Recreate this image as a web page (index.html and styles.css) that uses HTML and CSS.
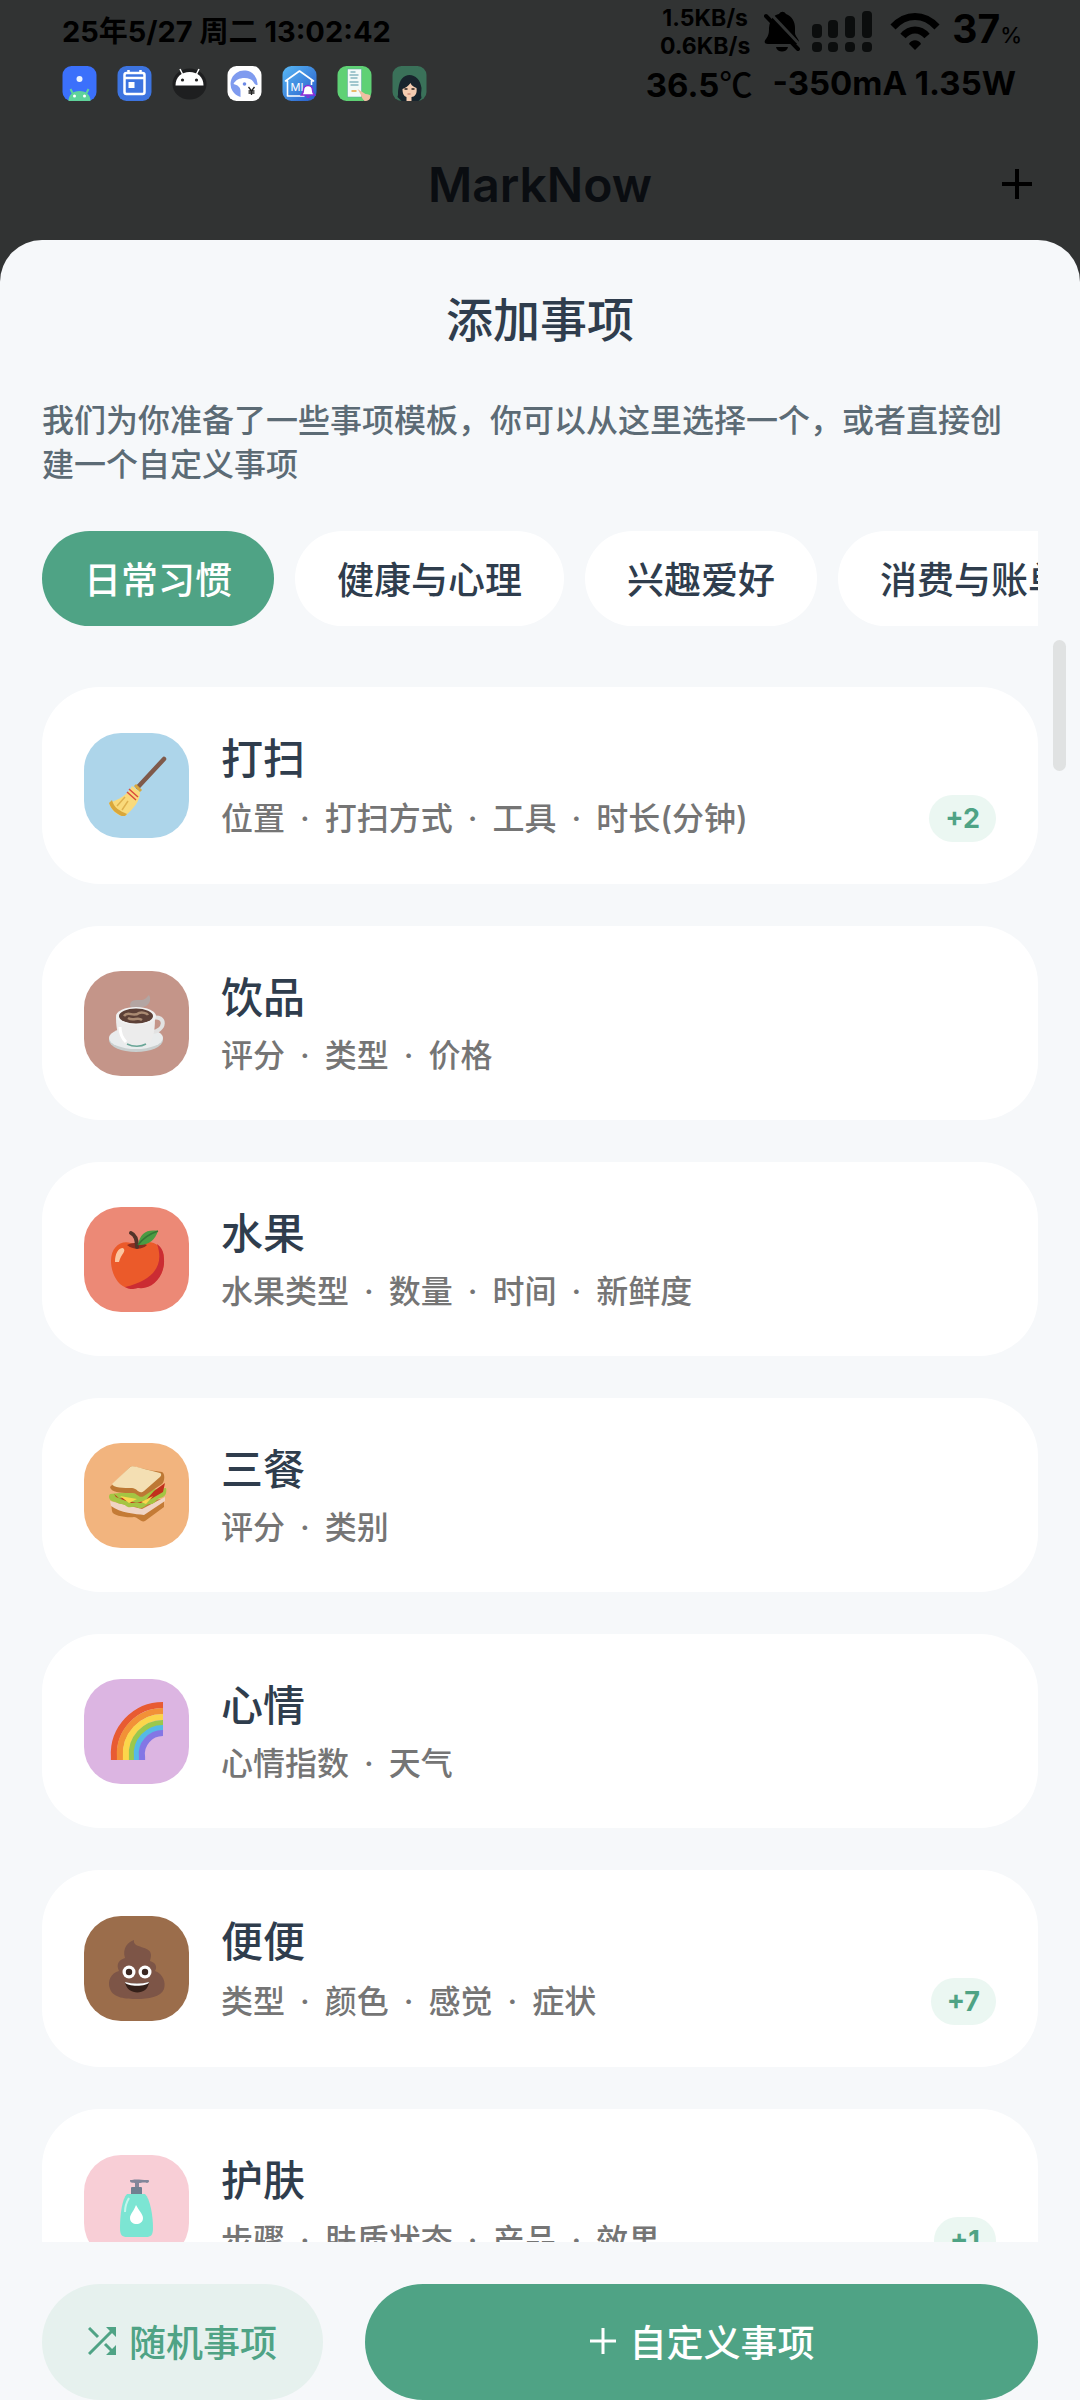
FILE: index.html
```
<!DOCTYPE html>
<html lang="zh-CN">
  <head>
    <meta charset="UTF-8" />
    <meta name="viewport" content="width=device-width, initial-scale=1.0" />
    <title>MarkNow</title>
    <link rel="stylesheet" href="styles.css">
  </head>
  <body>
    <div class="status-bar">
      <div class="status-left">
        <div class="clock">25年5/27 周二 13:02:42</div>
        <div class="notifications">
          <svg viewBox="0 0 34 35">
            <rect width="34" height="35" rx="9" fill="#3b70fb"/>
            <circle cx="17" cy="13" r="3" fill="#e8f2ff"/>
            <path d="M6 35c0-6 4-10 11-10s11 4 11 10z" fill="#5fd39b"/>
            <path d="M10 27l-2-4M24 27l2-4" stroke="#5fd39b" stroke-width="2"/>
            <circle cx="12" cy="30" r="1.5" fill="#fff"/>
            <circle cx="22" cy="30" r="1.5" fill="#fff"/>
          </svg>
          <svg viewBox="0 0 34 35">
            <rect width="34" height="35" rx="9" fill="#3d74e0"/>
            <rect x="7" y="7" width="20" height="21" rx="2" fill="none" stroke="#fff" stroke-width="2.5"/>
            <path d="M7 12h20M11 4v4M23 4v4" stroke="#fff" stroke-width="2.5"/>
            <rect x="11" y="16" width="6" height="6" fill="#fff"/>
          </svg>
          <svg viewBox="0 0 34 35">
            <ellipse cx="17" cy="18" rx="17" ry="15.500" fill="#1e1f20"/>
            <path d="M3 19.500C3 11 9 6 17 6s14 5 14 13.500z" fill="#fff"/>
            <path d="M10 8L7.500 3M24 8l2.500-5" stroke="#fff" stroke-width="1.500"/>
            <circle cx="10" cy="14" r="1.600" fill="#222"/>
            <circle cx="24" cy="14" r="1.600" fill="#222"/>
          </svg>
          <svg viewBox="0 0 34 35">
            <rect width="34" height="35" rx="9" fill="#fff"/>
            <path d="M13 31A13.500 13.500 0 1 1 30 19c-2 0-3-1-4-3-2-3-5-4-9-4-5 0-9 2-11 6 4 1 7 3 7 7z" fill="#7f9bef"/>
            <circle cx="17" cy="18" r="1.800" fill="#6d8ae6"/>
            <path d="M21 21l3 4 3-4M24 25v4M21 25h6M21 27h6" fill="none" stroke="#222" stroke-width="1.300"/>
          </svg>
          <svg viewBox="0 0 34 35">
            <defs>
              <linearGradient id="mi-home" x1="0" y1="0" x2="1" y2="1">
                <stop offset="0" stop-color="#58b9f5"/>
                <stop offset="1" stop-color="#2759c9"/>
              </linearGradient>
            </defs>
            <rect width="34" height="35" rx="9" fill="url(#mi-home)"/>
            <path d="M22 30H5V15H3L17 5l14 10h-2v4" fill="none" stroke="#fff" stroke-width="1.600" stroke-linejoin="round"/>
            <text class="mi-text" x="8" y="25">MI</text>
            <path d="M19 29c2-2 2-3 2-5a4.500 4.500 0 0 1 9 0c0 2 0 3 2 5z" fill="#fff" stroke="#8a2bd8" stroke-width="1.400"/>
            <path d="M24 30.500a2 2 0 0 0 3 0" fill="none" stroke="#8a2bd8" stroke-width="1.400"/>
          </svg>
          <svg viewBox="0 0 34 35">
            <rect width="34" height="35" rx="9" fill="#5fd175"/>
            <rect x="10" y="3" width="14" height="28" fill="#f3faf8" stroke="#57a4a0" stroke-width=".5"/>
            <path d="M13 6h5M12 9h9M13 12h7M12 16h9M13 19h8" stroke="#86b7c0" stroke-width="1.700"/>
            <path d="M14 25h5" stroke="#e8a33c" stroke-width="1.500"/>
            <path d="M20 23l8 5c3 0 5 1 5 2 0 3-2 5-6 5-2-2-3-4-4-7z" fill="#f0bfa2"/>
          </svg>
          <svg viewBox="0 0 34 35">
            <rect width="34" height="35" rx="9" fill="#3a7159"/>
            <path d="M5 31c1-3 0-5 1-9C7 14 11 9 17 9s11 5 12 13c0 4-1 6 0 10l-3 3H9z" fill="#18242d"/>
            <path d="M10 23c3-1 6-3 8-6 1 3 4 4 6 5 1 6-2 9-5 9v4h-5v-4c-3-1-4-4-4-8z" fill="#f3cbb0"/>
            <path d="M12 23h3M19 23h3" stroke="#26221f" stroke-width="1.500"/>
            <path d="M15 28h3" stroke="#b66a5c" stroke-width="1"/>
          </svg>
        </div>
      </div>
      <div class="status-right">
        <div class="status-row">
          <div class="speed">
            <div>1.5KB/s</div>
            <div>0.6KB/s</div>
          </div>
          <svg class="bell" viewBox="0 0 36 42">
            <path d="M5 17C6 8 10 4 15 3c2-3 5-3 7 0 6 2 9 8 9 14v5c0 3 4 6 4 9 0 2-1 2-3 2H4c-4 0-4-3-2-5 3-4 3-7 3-11z" fill="#000"/>
            <path d="M12 36h12c-1 6-11 6-12 0z" fill="#000"/>
            <path d="M5 1l34 36" stroke="#313333" stroke-width="3"/>
            <path d="M2 5l32 33" stroke="#000" stroke-width="4" stroke-linecap="round"/>
          </svg>
          <svg class="signal" viewBox="0 0 60 42">
            <g fill="#0b0d0d">
              <rect x="0" y="13" width="10" height="14" rx="4"/>
              <rect x="16" y="9" width="10" height="18" rx="4"/>
              <rect x="33" y="5" width="10" height="22" rx="4"/>
              <rect x="50" y="0" width="10" height="27" rx="4"/>
              <rect x="0" y="31" width="10" height="10" rx="4"/>
              <rect x="16" y="31" width="10" height="10" rx="4"/>
              <rect x="33" y="31" width="10" height="10" rx="4"/>
              <rect x="50" y="31" width="10" height="10" rx="4"/>
            </g>
          </svg>
          <svg class="wifi" viewBox="0 0 48 38">
            <path d="M2 14C15 0 33 0 46 14M12 23c7-8 17-8 24 0" fill="none" stroke="#000" stroke-width="7"/>
            <path d="M18 31c2-5 10-5 12 0l-6 6z" fill="#000"/>
          </svg>
          <div class="battery">37<small>%</small></div>
        </div>
        <div class="power"><span>36.5<span class="unit">℃</span></span><span>-350mA 1.35W</span></div>
      </div>
    </div>

    <header class="app-header">
      <h1>MarkNow</h1>
      <button class="add-btn" aria-label="添加">
        <svg viewBox="0 0 30 30"><path d="M15 0v30M0 15h30" stroke="#000" stroke-width="4"/></svg>
      </button>
    </header>

    <main class="sheet">
      <h2>添加事项</h2>
      <p class="intro">我们为你准备了一些事项模板，你可以从这里选择一个，或者直接创建一个自定义事项</p>

      <div class="tabs">
        <button class="tab active">日常习惯</button>
        <button class="tab">健康与心理</button>
        <button class="tab">兴趣爱好</button>
        <button class="tab">消费与账单</button>
      </div>

      <div class="list">
        <div class="card">
          <div class="icon blue">
            <svg viewBox="0 0 60 60">
              <path d="M31 31L57 3" stroke="#7f5a4b" stroke-width="4.500" stroke-linecap="round"/>
              <path d="M25 30l8 6c0 10-7 17-16 25C10 59 4 54 2 47c9-3 19-8 23-17z" fill="#f9da7b"/>
              <path d="M2 47c3 8 8 11 15 14l3-3C13 55 7 52 5 44z" fill="#d9a73b"/>
              <path d="M10 50l8-9M15 54l6-9" stroke="#dfb24e" stroke-width="1.500"/>
              <path d="M20 36l9 8M22 33l9 8" stroke="#da4b3d" stroke-width="1.500"/>
              <path d="M28 29l6 6" stroke="#d9a73b" stroke-width="3"/>
            </svg>
          </div>
          <div class="info">
            <h3>打扫</h3>
            <div class="meta">
              <p><span>位置</span><span>打扫方式</span><span>工具</span><span>时长(分钟)</span></p>
              <span class="badge">+2</span>
            </div>
          </div>
        </div>

        <div class="card">
          <div class="icon brown">
            <svg viewBox="0 0 60 60">
              <path d="M23 13c0-7 6-6 10-6 5 0 6-2 9-5 3 5 0 11-6 12-5 1-5 3-6 5z" fill="#b3a5a2"/>
              <ellipse cx="29" cy="47" rx="27" ry="12" fill="#c9cfcf"/>
              <ellipse cx="29" cy="45" rx="27" ry="11" fill="#e9eced"/>
              <path d="M45 25c15-4 14 14-1 14" fill="none" stroke="#e2e2e2" stroke-width="4"/>
              <path d="M9 24h39c0 18-3 30-14 30h-8C14 54 9 42 9 24z" fill="#ececec"/>
              <path d="M20 51c6 3 14 3 19 0" fill="none" stroke="#69a697" stroke-width="1.500"/>
              <path d="M13 34c0 7 3 12 6 15" fill="none" stroke="#fff" stroke-width="3"/>
              <ellipse cx="29" cy="23" rx="20" ry="9" fill="#f1f1f1"/>
              <ellipse cx="29" cy="23" rx="17" ry="7.500" fill="#5c4037"/>
              <path d="M17 23c4-6 9 2 15-3 3-1 8 0 9 2M21 25c6 4 9-2 14 2" fill="none" stroke="#a98a72" stroke-width="2.500"/>
            </svg>
          </div>
          <div class="info">
            <h3>饮品</h3>
            <div class="meta"><p><span>评分</span><span>类型</span><span>价格</span></p></div>
          </div>
        </div>

        <div class="card">
          <div class="icon red">
            <svg viewBox="0 0 60 60">
              <path d="M28 16C17 9 4 16 4 32c0 11 6 25 17 27 4 1 7-1 11-1 13 2 26-11 25-28C57 14 42 9 28 16z" fill="#eb5a2a"/>
              <path d="M50 15c8 22-5 37-32 43 7 4 10 1 14 1 13 2 26-12 25-28 0-8-2-12-7-16z" fill="#cb2c33"/>
              <path d="M20 16c6-3 14-3 20 0-5 5-14 5-20 0z" fill="#8d2e1f"/>
              <path d="M24 4c5 2 6 8 6 14" fill="none" stroke="#54342a" stroke-width="4" stroke-linecap="round"/>
              <path d="M31 16C33 4 40 0 51 2c-3 9-10 15-20 14z" fill="#4b9b43"/>
              <path d="M31 16C36 9 42 5 51 2" stroke="#347735" stroke-width="1.500" fill="none"/>
              <path d="M8 33c0-8 3-14 8-14 4 3-2 6-4 14z" fill="#fbc6a0"/>
            </svg>
          </div>
          <div class="info">
            <h3>水果</h3>
            <div class="meta"><p><span>水果类型</span><span>数量</span><span>时间</span><span>新鲜度</span></p></div>
          </div>
        </div>

        <div class="card">
          <div class="icon orange">
            <svg viewBox="0 0 60 60">
              <path d="M4 38l53-4v8L38 56c-4 2-7-4-11-4-6 1-22-1-22-6z" fill="#c47b36"/>
              <path d="M3 36l32 8 23-12v4L37 50c-8-1-24-2-33-9z" fill="#f0d5c5"/>
              <path d="M3 29c-3 4 1 8 6 8 4 3 7 1 10 4 4 3 8-1 12 2 6 1 7-3 11-4 6 1 7-5 11-6 6-1 7-6 6-10z" fill="#a4c543"/>
              <path d="M7 29l6 5 4-2 7 6 9-1 6-2 8-9 11-8-2 9-12 7-10 4-15-2-10-4z" fill="#c1311c"/>
              <path d="M13 31l17 3-8 4zM34 37l12-6-7 8z" fill="#fbd74d"/>
              <path d="M3 22L22 3c4-4 8 1 33 4 3 1 3 9 0 12L37 31c-5 3-7-3-11-3-5 0-22 1-23-6z" fill="#bd7834"/>
              <path d="M5 19L22 3c4-4 8 0 31 5 2 1 1 3 0 4L37 26c-5 4-7-3-12-3-8 0-19 0-20-4z" fill="#f4dfb3"/>
            </svg>
          </div>
          <div class="info">
            <h3>三餐</h3>
            <div class="meta"><p><span>评分</span><span>类别</span></p></div>
          </div>
        </div>

        <div class="card">
          <div class="icon purple">
            <svg viewBox="0 0 60 60">
              <g fill="none" stroke-width="6.200">
                <path d="M7 59V56A49 49 0 0 1 56 4" stroke="#e85b32"/>
                <path d="M13 59V56A43 43 0 0 1 56 10" stroke="#f29137"/>
                <path d="M19 59V56A37 37 0 0 1 56 16" stroke="#fbd64b"/>
                <path d="M25 59V56A31 31 0 0 1 56 22" stroke="#9bc84b"/>
                <path d="M30 59V56A26 26 0 0 1 56 27" stroke="#55b9e6"/>
                <path d="M35 59V56A21 21 0 0 1 56 32" stroke="#8376e5"/>
              </g>
            </svg>
          </div>
          <div class="info">
            <h3>心情</h3>
            <div class="meta"><p><span>心情指数</span><span>天气</span></p></div>
          </div>
        </div>

        <div class="card">
          <div class="icon dark-brown">
            <svg viewBox="0 0 60 60">
              <path d="M27 1c-2 9 17 5 17 15 0 3-1 5-1 6 7 2 7 7 5 10 8 3 11 11 9 18-3 8-16 10-27 10S6 59 3 50c-3-8 1-16 9-18-3-6-1-11 6-13C15 9 21 3 27 1z" fill="#7d5547"/>
              <circle cx="22" cy="33" r="6.500" fill="#fff"/>
              <circle cx="38" cy="33" r="6.500" fill="#fff"/>
              <circle cx="22" cy="33" r="3.200" fill="#3b2721"/>
              <circle cx="38" cy="33" r="3.200" fill="#3b2721"/>
              <path d="M18 43c8 2 16 2 24 0-1 14-22 14-24 0z" fill="#352019"/>
              <path d="M18 43c8 2 16 2 24 0-1 5-23 5-24 0z" fill="#fff"/>
            </svg>
          </div>
          <div class="info">
            <h3>便便</h3>
            <div class="meta">
              <p><span>类型</span><span>颜色</span><span>感觉</span><span>症状</span></p>
              <span class="badge">+7</span>
            </div>
          </div>
        </div>

        <div class="card">
          <div class="icon pink">
            <svg viewBox="0 0 60 60">
              <path d="M25 2c5-1 8 0 16 0 2 0 1 3-1 3-3-1-6 0-8 0v6h-4V5c-3-1-5 1-5-3z" fill="#82869a"/>
              <rect x="24" y="9" width="11" height="9" rx="1" fill="#708091"/>
              <path d="M20 16h18c5 5 8 21 8 34 0 7-2 9-7 9H20c-5 0-7-2-7-9 0-13 2-29 7-34z" fill="#7ce5d3"/>
              <path d="M22 20c-3 5-4 9-4 14" fill="none" stroke="#c4f6ed" stroke-width="2"/>
              <path d="M29 27c3 6 7 9 7 13 0 8-13 8-13 0 0-4 4-7 6-13z" fill="#fff"/>
            </svg>
          </div>
          <div class="info">
            <h3>护肤</h3>
            <div class="meta">
              <p><span>步骤</span><span>肤质状态</span><span>产品</span><span>效果</span></p>
              <span class="badge">+1</span>
            </div>
          </div>
        </div>
      </div>
      <div class="scroll-thumb"></div>

      <div class="actions">
        <button class="random-btn">
          <svg viewBox="0 0 28 28">
            <path d="M1 1l9 9M1 27L25 3M17 17l8 8" fill="none" stroke="#4fa385" stroke-width="3"/>
            <path d="M18 0h10v10zM18 28h10V18z" fill="#4fa385"/>
          </svg>
          随机事项
        </button>
        <button class="custom-btn">
          <svg viewBox="0 0 28 28"><path d="M14 1v26M1 14h26" stroke="#fff" stroke-width="3"/></svg>
          自定义事项
        </button>
      </div>
    </main>
  </body>
</html>
```
FILE: styles.css
```
* {
  box-sizing: border-box;
}

body {
  display: flex;
  flex-direction: column;
  height: 100vh;
  margin: 0;
  background-color: #313333;
  font-family: Inter, "Noto Sans CJK SC", sans-serif;
  overflow: hidden;
}

h1, h2, h3, p {
  margin: 0;
}

svg {
  display: block;
  flex-shrink: 0;
}

button {
  border: none;
  padding: 0;
  font-family: inherit;
  font-weight: 500;
  cursor: pointer;
}

/* status bar */
.status-bar {
  display: flex;
  justify-content: space-between;
  height: 128px;
  padding: 4px 58px 0 62px;
  font-weight: 700;
  color: #000;
}

.clock {
  font-size: 29px;
  line-height: 56px;
}

.notifications {
  display: flex;
  gap: 20px;
  padding-top: 6px;
}

.notifications svg {
  width: 35px;
  height: 35px;
}

.mi-text {
  font-size: 11px;
  font-weight: 400;
  fill: #fff;
}

.status-right {
  display: flex;
  flex-direction: column;
  align-items: flex-end;
}

.status-row {
  display: flex;
  align-items: center;
  height: 56px;
}

.speed {
  margin-right: 14px;
  font-size: 23px;
  line-height: 28px;
  text-align: center;
}

.bell {
  width: 36px;
  height: 42px;
  margin-right: 12px;
}

.signal {
  width: 60px;
  height: 42px;
  margin-right: 18px;
}

.wifi {
  width: 50px;
  height: 38px;
  margin-right: 12px;
}

.battery {
  font-size: 39px;
  line-height: 56px;
}

.battery small {
  font-size: 22px;
  font-weight: 500;
}

.power {
  display: flex;
  gap: 20px;
  margin-right: 6px;
  font-size: 33px;
  line-height: 46px;
}

.unit {
  font-family: "Noto Sans CJK SC", sans-serif;
  font-weight: 500;
}

/* header */
.app-header {
  display: grid;
  grid-template-columns: 1fr auto 1fr;
  align-items: center;
  height: 112px;
  padding: 0 48px;
}

.app-header h1 {
  grid-column: 2;
  font-size: 48px;
  font-weight: 600;
  color: #0a0d11;
}

.add-btn {
  justify-self: end;
  background: none;
}

.add-btn svg {
  width: 30px;
  height: 30px;
}

/* bottom sheet */
.sheet {
  position: relative;
  display: flex;
  flex-direction: column;
  flex: 1;
  min-height: 0;
  padding: 46px 42px 0;
  background-color: #f6f8fa;
  border-radius: 42px 42px 0 0;
}

.sheet h2 {
  font-size: 47px;
  line-height: 68px;
  font-weight: 500;
  text-align: center;
  color: #2f3d4d;
}

.intro {
  padding: 45px 10px 0 0;
  font-size: 32px;
  line-height: 44px;
  font-weight: 500;
  color: #5c6b75;
}

.tabs {
  display: flex;
  flex-shrink: 0;
  gap: 21px;
  margin-top: 44px;
  overflow: hidden;
}

.tab {
  flex-shrink: 0;
  height: 95px;
  padding: 0 42px 2px;
  border-radius: 48px;
  background-color: #fff;
  color: #2f3d4d;
  font-size: 37px;
}

.tab.active {
  background-color: #4fa385;
  color: #fff;
}

.list {
  display: flex;
  flex-direction: column;
  flex: 1;
  gap: 42px;
  min-height: 0;
  margin-top: 61px;
  overflow: hidden;
}

.card {
  display: flex;
  flex-shrink: 0;
  align-items: center;
  gap: 32px;
  padding: 42px;
  border-radius: 58px;
  background-color: #fff;
}

.icon {
  display: flex;
  align-items: center;
  justify-content: center;
  width: 105px;
  height: 105px;
  border-radius: 37px;
}

.icon svg {
  width: 60px;
  height: 60px;
}

.blue { background-color: #add5ea; }
.brown { background-color: #c49589; }
.red { background-color: #ec8976; }
.orange { background-color: #f2b47e; }
.purple { background-color: #dcb5e2; }
.dark-brown { background-color: #9b6d4b; }
.pink { background-color: #f8ced6; }

.info {
  flex: 1;
}

.info h3 {
  font-size: 42px;
  line-height: 60px;
  font-weight: 500;
  color: #2f3d4d;
}

.meta {
  display: flex;
  align-items: center;
  justify-content: space-between;
  margin-top: 6px;
}

.meta p {
  display: flex;
  font-size: 32px;
  line-height: 44px;
  font-weight: 500;
  color: #757575;
}

.meta p span + span::before {
  content: "·";
  margin: 0 15px;
}

.badge {
  padding: 0 16px;
  border-radius: 24px;
  background-color: #ebf7f2;
  color: #4fa385;
  font-size: 27px;
  line-height: 47px;
  font-weight: 700;
}

.scroll-thumb {
  position: absolute;
  top: 400px;
  right: 14px;
  width: 13px;
  height: 131px;
  border-radius: 7px;
  background-color: #e0e2e2;
}

.actions {
  display: flex;
  flex-shrink: 0;
  gap: 42px;
  padding-top: 42px;
}

.actions button {
  display: flex;
  align-items: center;
  justify-content: center;
  gap: 13px;
  height: 116px;
  padding: 0 46px 2px;
  border-radius: 58px;
  font-size: 37px;
}

.actions svg {
  width: 28px;
  height: 28px;
}

.actions .random-btn {
  background-color: #e6f1ee;
  color: #4fa385;
}

.actions .custom-btn {
  flex: 1;
  background-color: #4fa385;
  color: #fff;
}
```
